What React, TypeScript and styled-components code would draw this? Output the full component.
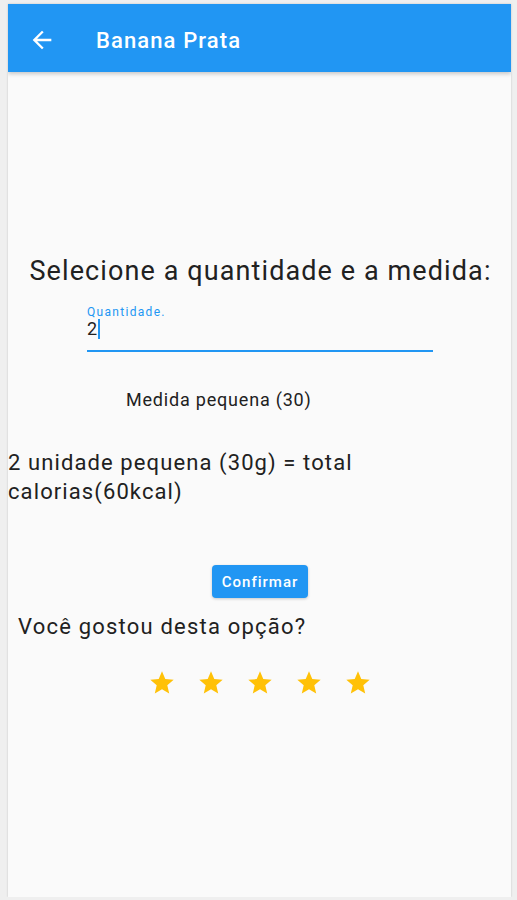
import styled, { createGlobalStyle } from 'styled-components'

const GlobalStyle = createGlobalStyle`
  html, body {
    margin: 0;
    padding: 0;
    background: #efefef;
    font-family: Roboto, 'Noto Sans', sans-serif;
  }
`

const Screen = styled.div`
  margin: 4px 0 0 8px;
  width: 503px;
  height: 893px;
  background: #fafafa;
  box-shadow: 0 0 2px rgba(0, 0, 0, 0.18);
  display: flex;
  flex-direction: column;
  overflow: hidden;
`

const AppBar = styled.header`
  height: 68px;
  flex-shrink: 0;
  box-sizing: border-box;
  padding: 4px 0 0 20px;
  background: #2196f3;
  display: flex;
  align-items: center;
  box-shadow: 0 2px 4px rgba(0, 0, 0, 0.2);
`

const BackButton = styled.button`
  width: 28px;
  height: 28px;
  padding: 0;
  border: none;
  background: none;
  display: flex;
  align-items: center;
  justify-content: center;
`

const Title = styled.h1`
  margin: 0 0 0 40px;
  color: #ffffff;
  font-size: 22px;
  font-weight: 500;
  letter-spacing: 1.1px;
`

const Body = styled.main`
  display: flex;
  flex-direction: column;
  padding-top: 184px;
`

const Heading = styled.h2`
  margin: 0;
  padding-left: 2px;
  text-align: center;
  font-size: 27px;
  font-weight: 400;
  letter-spacing: 1.1px;
  color: #212121;
  line-height: 30px;
`

const Field = styled.label`
  margin: 20px 0 0 79px;
  width: 346px;
  display: flex;
  flex-direction: column;
  border-bottom: 2px solid #2196f3;
  padding-bottom: 11px;
`

const FieldLabel = styled.span`
  font-size: 12px;
  line-height: 13px;
  letter-spacing: 1.3px;
  color: #2196f3;
`

const FieldValue = styled.span`
  display: flex;
  align-items: center;
  font-size: 18px;
  line-height: 20px;
  color: #212121;
`

const Caret = styled.span`
  width: 2px;
  height: 20px;
  margin-left: 1px;
  background: #2196f3;
`

const Measure = styled.p`
  margin: 38px 0 0 118px;
  font-size: 18px;
  line-height: 20px;
  letter-spacing: 0.8px;
  color: #212121;
`

const Summary = styled.p`
  margin: 38px 0 0 0;
  width: 380px;
  font-size: 22px;
  line-height: 29px;
  letter-spacing: 1.1px;
  color: #212121;
`

const ConfirmButton = styled.button`
  align-self: center;
  margin: 59px 0 0 1px;
  height: 33px;
  padding: 0 10px;
  border: none;
  border-radius: 4px;
  background: #2196f3;
  color: #ffffff;
  font-family: Roboto, sans-serif;
  font-size: 15px;
  font-weight: 500;
  letter-spacing: 1px;
  box-shadow: 0 1px 3px rgba(0, 0, 0, 0.2);
`

const Question = styled.p`
  margin: 16px 0 0 10px;
  font-size: 22px;
  line-height: 26px;
  letter-spacing: 1.2px;
  color: #212121;
`

const Stars = styled.div`
  display: flex;
  justify-content: center;
  gap: 21px;
  margin: 29px 0 0 0;
`

const Star = () => (
  <svg width="28" height="28" viewBox="0 0 24 24">
    <path
      fill="#ffc107"
      d="M12 17.27L18.18 21l-1.64-7.03L22 9.24l-7.19-.61L12 2 9.19 8.63 2 9.24l5.46 4.73L5.82 21z"
    />
  </svg>
)

export default function App() {
  return (
    <>
      <GlobalStyle />
      <Screen>
        <AppBar>
          <BackButton aria-label="Voltar">
            <svg width="28" height="28" viewBox="0 0 24 24">
              <path fill="#ffffff" d="M20 11H7.83l5.59-5.59L12 4l-8 8 8 8 1.41-1.41L7.83 13H20v-2z" />
            </svg>
          </BackButton>
          <Title>Banana Prata</Title>
        </AppBar>
        <Body>
          <Heading>Selecione a quantidade e a medida:</Heading>
          <Field>
            <FieldLabel>Quantidade.</FieldLabel>
            <FieldValue>
              2<Caret />
            </FieldValue>
          </Field>
          <Measure>Medida pequena (30)</Measure>
          <Summary>2 unidade pequena (30g) = total calorias(60kcal)</Summary>
          <ConfirmButton>Confirmar</ConfirmButton>
          <Question>Você gostou desta opção?</Question>
          <Stars>
            {[0, 1, 2, 3, 4].map((i) => (
              <Star key={i} />
            ))}
          </Stars>
        </Body>
      </Screen>
    </>
  )
}
